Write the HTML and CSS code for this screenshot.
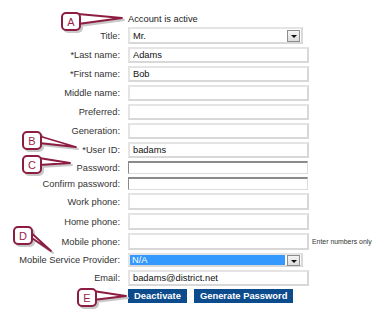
FILE: index.html
```html
<!DOCTYPE html>
<html lang="en">
<head>
    <meta charset="UTF-8">
    <title>User account</title>
    <link rel="stylesheet" href="styles.css">
</head>
<body>
    <div class="page">
        <div class="form">
            <div class="row status">
                <span class="label"></span>
                <span class="status-text">Account is active</span>
            </div>
            <div class="row tall">
                <label class="label">Title:</label>
                <div class="select"><span class="value">Mr.</span><span class="arrow"></span></div>
            </div>
            <div class="row">
                <label class="label">*Last name:</label>
                <input class="text" type="text" value="Adams">
            </div>
            <div class="row">
                <label class="label">*First name:</label>
                <input class="text" type="text" value="Bob">
            </div>
            <div class="row">
                <label class="label">Middle name:</label>
                <input class="text" type="text">
            </div>
            <div class="row">
                <label class="label">Preferred:</label>
                <input class="text" type="text">
            </div>
            <div class="row">
                <label class="label">Generation:</label>
                <input class="text" type="text">
            </div>
            <div class="row">
                <label class="label">*User ID:</label>
                <input class="text" type="text" value="badams">
            </div>
            <div class="row">
                <label class="label">Password:</label>
                <input class="pwd" type="password">
            </div>
            <div class="row">
                <label class="label">Confirm password:</label>
                <input class="pwd" type="password">
            </div>
            <div class="row tall">
                <label class="label">Work phone:</label>
                <input class="text" type="text">
            </div>
            <div class="row tall">
                <label class="label">Home phone:</label>
                <input class="text" type="text">
            </div>
            <div class="row tall">
                <label class="label">Mobile phone:</label>
                <input class="text" type="text">
                <span class="hint">Enter numbers only</span>
            </div>
            <div class="row">
                <label class="label">Mobile Service Provider:</label>
                <div class="select provider"><span class="value">N/A</span><span class="arrow"></span></div>
            </div>
            <div class="row">
                <label class="label">Email:</label>
                <input class="text" type="text" value="badams@district.net">
            </div>
            <div class="row">
                <span class="label"></span>
                <div class="actions">
                    <button class="btn">Deactivate</button>
                    <button class="btn">Generate Password</button>
                </div>
            </div>
        </div>

        <!-- annotation callouts drawn over the form -->
        <svg class="callouts" width="386" height="313" viewBox="0 0 386 313">
            <g class="shadow" transform="translate(2,2)">
                <polygon points="78,14 122,18 78,24"/>
                <rect x="62" y="13" width="18" height="17" rx="4"/>
                <polygon points="39,136 76,147 39,143"/>
                <rect x="23" y="132" width="18" height="17" rx="4"/>
                <polygon points="39,158 70,163 39,165"/>
                <rect x="23" y="156" width="18" height="17" rx="4"/>
                <polygon points="27,229 51,251 29,236"/>
                <rect x="14" y="227" width="18" height="17" rx="4"/>
                <polygon points="93,291 126,296 93,300"/>
                <rect x="78" y="289" width="18" height="17" rx="4"/>
            </g>
            <g class="tail">
                <polygon points="78,14 122,18 78,24"/>
                <polygon points="39,136 76,147 39,143"/>
                <polygon points="39,158 70,163 39,165"/>
                <polygon points="27,229 51,251 29,236"/>
                <polygon points="93,291 126,296 93,300"/>
            </g>
            <g class="box">
                <rect x="62" y="13" width="18" height="17" rx="4"/>
                <rect x="23" y="132" width="18" height="17" rx="4"/>
                <rect x="23" y="156" width="18" height="17" rx="4"/>
                <rect x="14" y="227" width="18" height="17" rx="4"/>
                <rect x="78" y="289" width="18" height="17" rx="4"/>
            </g>
            <g class="letter">
                <text x="71" y="26">A</text>
                <text x="32" y="145">B</text>
                <text x="32" y="169">C</text>
                <text x="23" y="240">D</text>
                <text x="87" y="302">E</text>
            </g>
        </svg>
    </div>
</body>
</html>
```

FILE: styles.css
```css
* {
    box-sizing: border-box;
}

body {
    margin: 0;
    background: #fff;
    font-family: 'Liberation Sans', Arial, sans-serif;
    color: #333;
}

.page {
    position: relative;
    width: 386px;
    height: 313px;
}

.form {
    padding-top: 13px;
}

.row {
    display: flex;
    align-items: center;
    margin-bottom: 3px;
}

.row.status {
    height: 12px;
    margin-bottom: 2px;
}

.label {
    flex: none;
    width: 120px;
    margin-right: 8px;
    text-align: right;
    font-size: 9.3px;
    color: #333;
}

.status-text {
    font-size: 9.3px;
    color: #222;
}

.text {
    width: 181px;
    height: 16px;
    margin: 0;
    padding: 0 3px;
    border: 2px solid #e4e4e4;
    border-right-color: #d8d8d8;
    border-bottom-color: #d8d8d8;
    font-family: inherit;
    font-size: 9.3px;
    color: #111;
    background: #fff;
    outline: none;
}

.row.tall .text,
.row.tall .select {
    height: 17px;
}

.pwd {
    width: 180px;
    height: 13px;
    margin: 0;
    padding: 0 3px;
    border: 1px solid #dcdcdc;
    border-top: 2px solid #8a8a8a;
    border-left-color: #8a8a8a;
    background: #fff;
    outline: none;
}

.select {
    display: flex;
    align-items: center;
    width: 175px;
    height: 16px;
    padding: 0 1px 0 2px;
    border: 2px solid #e4e4e4;
    border-right-color: #d8d8d8;
    border-bottom-color: #d8d8d8;
    background: #fff;
    font-size: 9.3px;
    color: #111;
}

.select .value {
    flex: 1;
    padding-left: 1px;
}

.select .arrow {
    position: relative;
    width: 13px;
    height: 12px;
    border: 1px solid #8d8d8d;
    background: linear-gradient(#f4f4f4, #dcdcdc);
}

.select .arrow::after {
    content: "";
    position: absolute;
    left: 3px;
    top: 4px;
    border-left: 3px solid transparent;
    border-right: 3px solid transparent;
    border-top: 3px solid #111;
}

.select.provider {
    height: 14px;
    padding: 0 1px 0 0;
}

.select.provider .value {
    height: 100%;
    margin-right: 2px;
    padding-left: 2px;
    background: #3399ff;
    color: #fff;
    line-height: 10px;
}

.select.provider .arrow {
    height: 11px;
}

.hint {
    margin-left: 3px;
    font-size: 6.9px;
    color: #333;
}

.actions {
    display: flex;
    gap: 7px;
}

.btn {
    height: 14px;
    margin: 0;
    padding: 0 6px;
    border: none;
    border-radius: 0;
    background: #0d4c8c;
    color: #fff;
    font-family: inherit;
    font-size: 9.4px;
    font-weight: bold;
    line-height: 14px;
}

.callouts {
    position: absolute;
    top: 0;
    left: 0;
    pointer-events: none;
}

.callouts .shadow {
    fill: #c8c8c8;
    stroke: #c8c8c8;
    stroke-width: 2;
    stroke-linejoin: round;
}

.callouts .tail {
    fill: #fff;
    stroke: #8c1d40;
    stroke-width: 1.8;
    stroke-linejoin: round;
}

.callouts .box {
    fill: #fff;
    stroke: #8c1d40;
    stroke-width: 2;
}

.callouts .letter {
    fill: #9b1d45;
    font-size: 11px;
    text-anchor: middle;
}
```
